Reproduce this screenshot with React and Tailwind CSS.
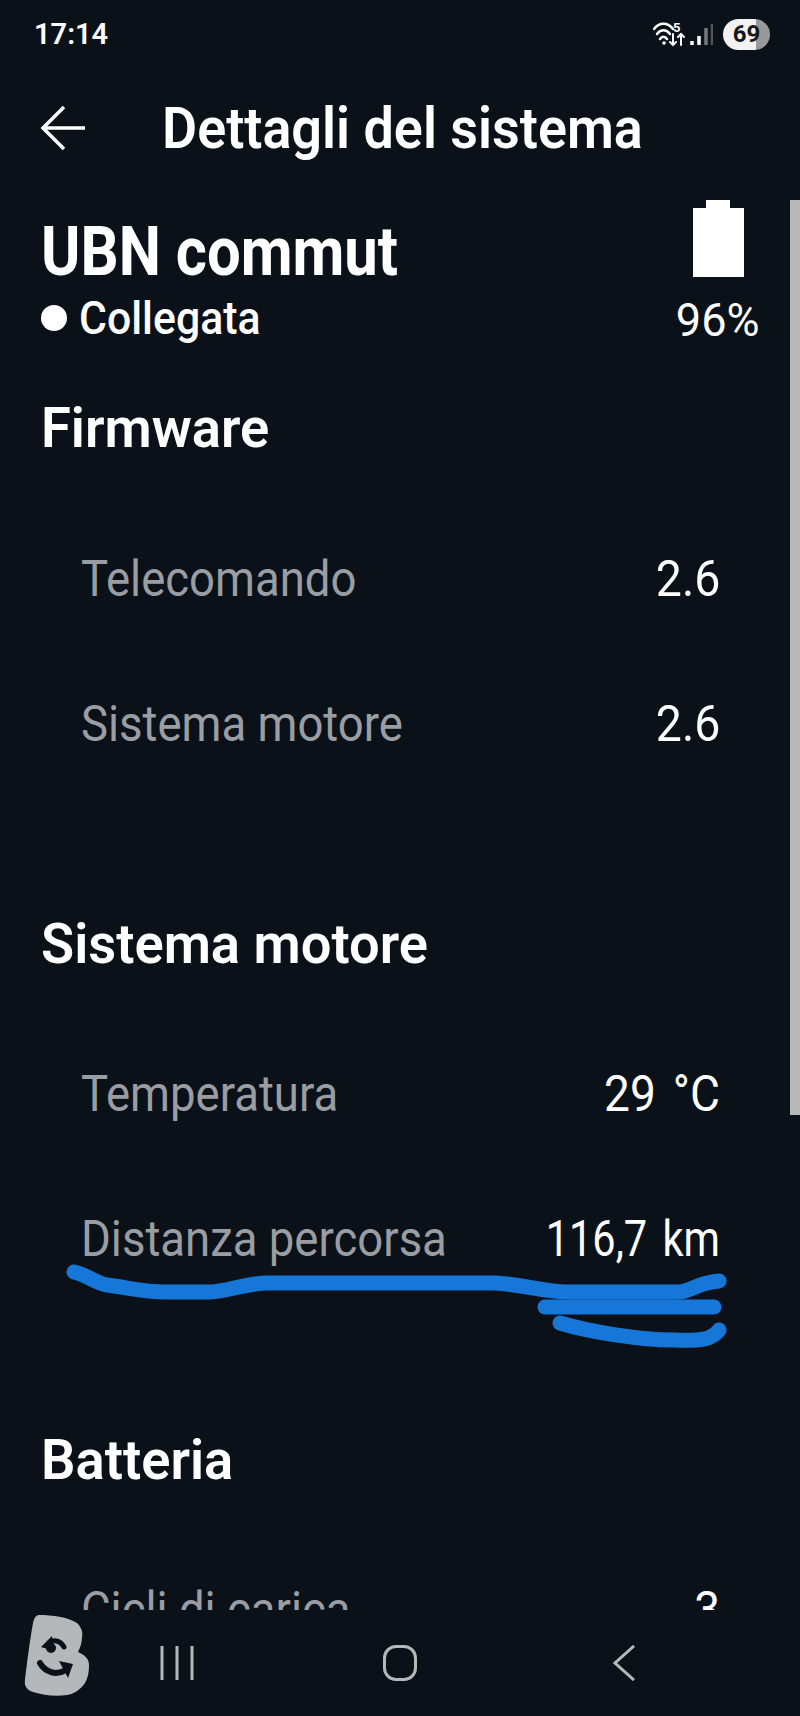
import React from "react";

const font = "font-['Roboto',sans-serif]";

const Row = ({ label, value, valueClass = "scale-x-[0.92]" }) => (
  <div className="flex items-center justify-between pl-[81px] pr-[80px] h-[145px]">
    <span className="text-[50px] leading-none text-[#9a9ea3] scale-x-[0.91] origin-left whitespace-nowrap">{label}</span>
    <span className={`text-[50px] leading-none text-white origin-right whitespace-nowrap [word-spacing:0.12em] ${valueClass}`}>{value}</span>
  </div>
);

const SectionTitle = ({ children, className = "" }) => (
  <div className={`pl-[41px] ${className}`}>
    <h2 className="text-[56px] leading-none font-semibold text-white scale-x-[0.97] origin-left whitespace-nowrap">
      {children}
    </h2>
  </div>
);

const StatusIcons = () => (
  <div className="flex items-center">
    <svg width="60" height="32" viewBox="0 0 60 32" fill="none" stroke="white" strokeLinecap="round">
      <path d="M1 11C6 4 15 4 20 11" strokeWidth="2.5" />
      <path d="M4 16C8 11 13 11 17 16" strokeWidth="2.5" />
      <path d="M7 21C9 18 12 18 14 21" strokeWidth="2.5" />
      <circle cx="11" cy="25" r="1.8" fill="white" stroke="none" />
      <text x="20" y="14" fontSize="13" fontWeight="700" fill="white" stroke="none" fontFamily="Roboto">5</text>
      <path d="M20 16V27M17 24L20 27L23 24" strokeWidth="2" />
      <path d="M28 27V16M25 19L28 16L31 19" strokeWidth="2" />
      <path d="M39 23V27" strokeWidth="3.5" strokeLinecap="butt" />
      <path d="M46 18V27" strokeWidth="3.5" strokeLinecap="butt" />
      <path d="M53 10V27" strokeWidth="3.5" strokeLinecap="butt" stroke="#777" />
      <path d="M59 6V27" strokeWidth="2.5" strokeLinecap="butt" stroke="#555" />
    </svg>
    <div className="ml-[10px] w-[47px] h-[31px] rounded-full bg-[linear-gradient(90deg,#f2f2f2_70%,#999999_70%)] flex items-center justify-center text-[24px] font-bold text-[#14171b] leading-none">
      69
    </div>
  </div>
);

export default function App() {
  return (
    <div className={`relative flex flex-col h-[1716px] w-[800px] overflow-hidden bg-[#0a1119] text-white ${font}`}>
      {/* status bar */}
      <div className="flex items-center justify-between h-[68px] pl-[34px] pr-[30px] shrink-0">
        <span className="text-[29px] font-semibold leading-none">17:14</span>
        <StatusIcons />
      </div>

      {/* header */}
      <div className="flex items-center h-[120px] pl-[40px] shrink-0">
        <svg width="46" height="44" viewBox="0 0 46 44" fill="none" stroke="white" strokeWidth="3.5">
          <path d="M45 22H3" />
          <path d="M24 1L3 22L24 43" />
        </svg>
        <h1 className="ml-[76px] text-[58px] leading-none font-semibold scale-x-[0.93] origin-left whitespace-nowrap">
          Dettagli del sistema
        </h1>
      </div>

      {/* scrolling content */}
      <div className="flex-1 overflow-hidden">
        <div className="flex justify-between pt-[12px]">
          <div className="pl-[41px]">
            <div className="text-[68px] leading-none font-bold mt-[18px] scale-x-[0.88] origin-left whitespace-nowrap">UBN commut</div>
            <div className="flex items-center mt-[9px]">
              <span className="w-[26px] h-[26px] rounded-full bg-white" />
              <span className="ml-[12px] text-[46px] leading-none font-medium scale-x-[0.93] origin-left whitespace-nowrap">Collegata</span>
            </div>
          </div>
          <div className="flex flex-col items-center w-[82px] mr-[41px]">
            <div className="w-[24px] h-[8px] bg-white" />
            <div className="w-[51px] h-[69px] bg-white" />
            <span className="mt-[20px] text-[46px] leading-none whitespace-nowrap scale-x-[0.98]">96%</span>
          </div>
        </div>

        <SectionTitle className="mt-[57px]">Firmware</SectionTitle>
        <div className="mt-[50px]">
          <Row label="Telecomando" value="2.6" valueClass="scale-x-[0.93]" />
          <Row label="Sistema motore" value="2.6" valueClass="scale-x-[0.93]" />
        </div>

        <SectionTitle className="mt-[120px]">Sistema motore</SectionTitle>
        <div className="mt-[49px]">
          <Row label="Temperatura" value="29 °C" />
          <Row label="Distanza percorsa" value="116,7 km" valueClass="scale-x-[0.83]" />
        </div>

        <SectionTitle className="mt-[121px]">Batteria</SectionTitle>
        <div className="mt-[49px]">
          <Row label="Cicli di carica" value="3" />
        </div>
      </div>

      {/* nav bar */}
      <div className="relative h-[106px] shrink-0 bg-[#0a1119] flex items-center justify-between pl-[160px] pr-[165px]">
        <svg width="34" height="36" viewBox="0 0 34 36" fill="none" stroke="#b5b8ba" strokeWidth="3">
          <path d="M2 1V35M17 1V35M32 1V35" />
        </svg>
        <div className="mr-[7px] w-[34px] h-[36px] rounded-[13px] border-[3px] border-[#b5b8ba]" />
        <svg width="22" height="36" viewBox="0 0 22 36" fill="none" stroke="#b5b8ba" strokeWidth="3">
          <path d="M21 1L2 18L21 35" />
        </svg>
      </div>

      {/* scrollbar */}
      <div className="absolute right-0 top-[200px] w-[10px] h-[915px] bg-[#b9b9b9]" />

      {/* hand drawn strokes */}
      <svg className="absolute left-0 top-[1260px]" width="800" height="100" viewBox="0 1260 800 100" fill="none" stroke="#1677d8" strokeWidth="15" strokeLinecap="round" strokeLinejoin="round">
        <path d="M74 1272C90 1276 95 1283 107 1285C130 1288 145 1292 165 1292H210C230 1291 245 1283 268 1283H495C520 1284 545 1292 567 1292H678C690 1292 696 1283 719 1281" />
        <path d="M545 1307H714" />
        <path d="M560 1323C590 1332 640 1340 674 1340C700 1341 712 1340 719 1330" />
      </svg>

      {/* floating logo */}
      <svg className="absolute left-[10px] top-[1600px]" width="100" height="100" viewBox="0 0 100 100">
        <path d="M29 15C42 15 58 17 67 23C72 28 73 33 72 37C72 43 70 48 68 52C75 55 79 59 79 65C79 72 78 78 75 83C70 90 64 94 57 95C45 97 33 95 23 92C17 90 14 86 15 80C17 62 20 40 23 23C24 18 26 15 29 15Z" fill="#b5b8ba" />
        <g fill="none" stroke="#0a1119" strokeLinecap="round">
          <path d="M54 47C50 40 43 39 38 44" strokeWidth="5" />
          <path d="M30 63C35 72 46 76 56 70" strokeWidth="6" />
        </g>
        <path d="M31 47L42 36L44 51Z" fill="#0a1119" />
        <path d="M49 61L63 64L58 78Z" fill="#0a1119" />
        <circle cx="41" cy="48" r="5" fill="#0a1119" />
      </svg>
    </div>
  );
}
